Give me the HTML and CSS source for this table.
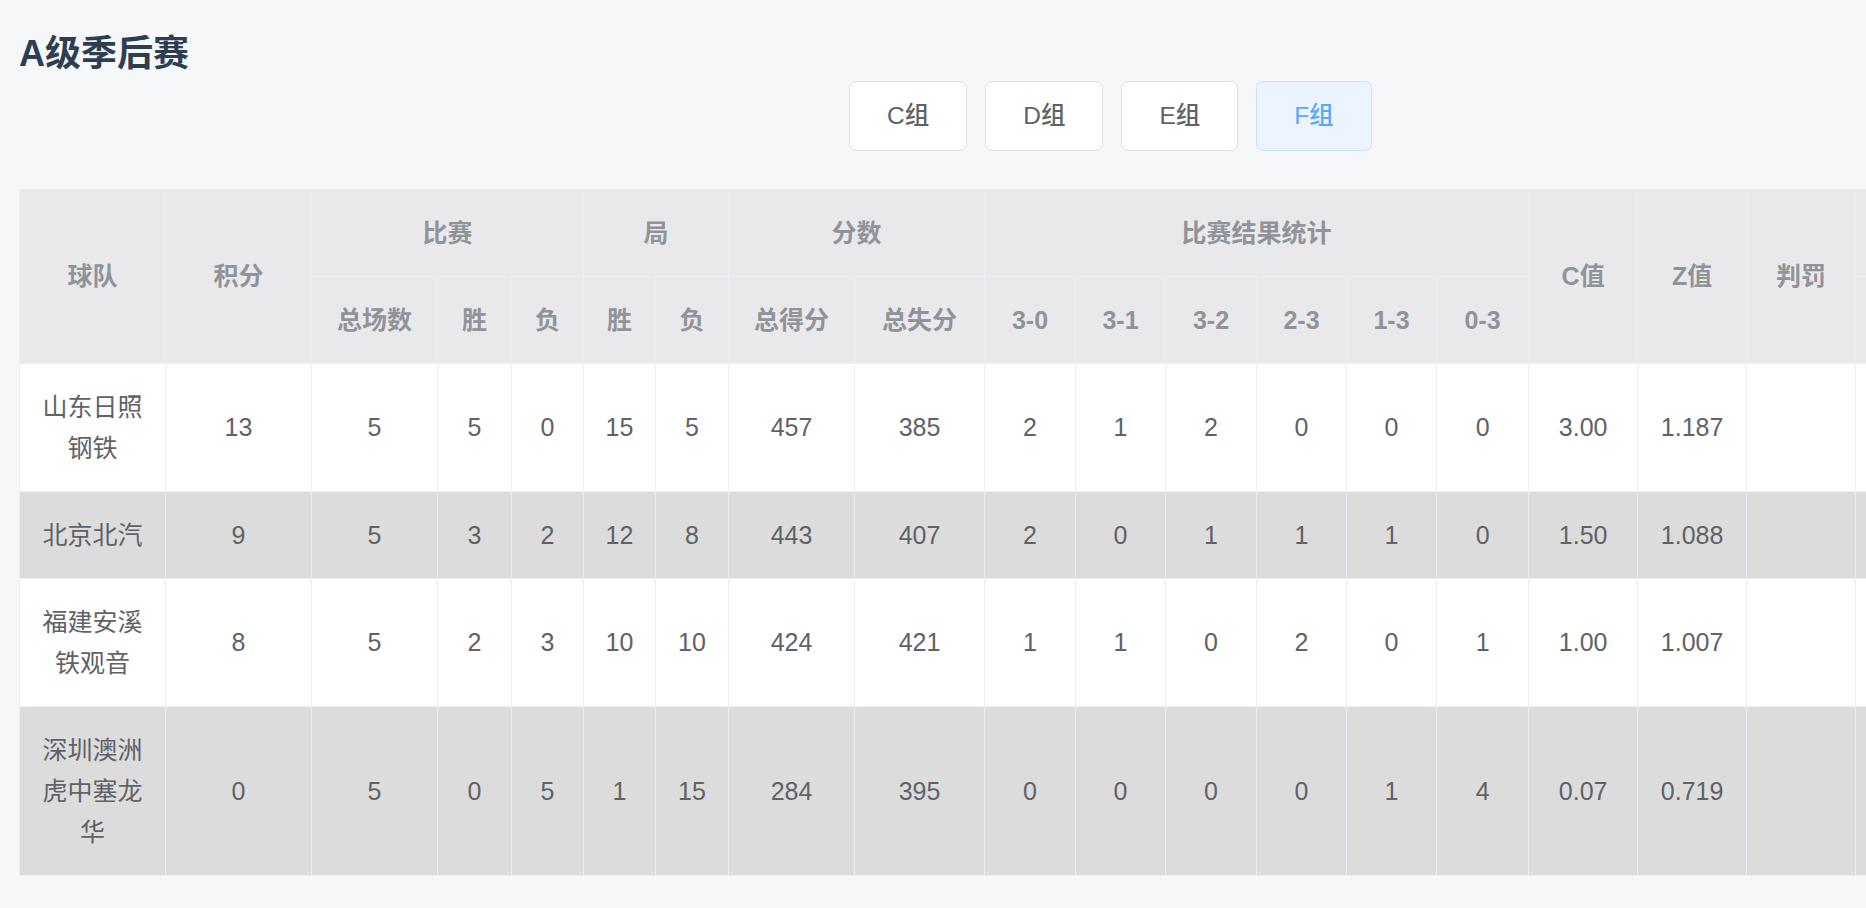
FILE: index.html
```html
<!DOCTYPE html>
<html lang="zh-CN">
<head>
<meta charset="utf-8">
<title>A级季后赛</title>
<link rel="stylesheet" href="styles.css">
</head>
<body>
<div class="page">
  <h1 class="title">A级季后赛</h1>
  <div class="groups">
    <button class="btn">C组</button>
    <button class="btn">D组</button>
    <button class="btn">E组</button>
    <button class="btn active">F组</button>
  </div>
  <div class="table-wrap">
    <table class="standings">
      <colgroup>
        <col class="w146"><col class="w146"><col class="w126"><col class="w74"><col class="w72"><col class="w72"><col class="w73"><col class="w126"><col class="w130"><col class="w91"><col class="w90"><col class="w91"><col class="w90"><col class="w90"><col class="w92"><col class="w109"><col class="w109"><col class="w109"><col class="w180"><col class="w180">
      </colgroup>
      <thead>
        <tr>
          <th rowspan="2">球队</th>
          <th rowspan="2">积分</th>
          <th colspan="3">比赛</th>
          <th colspan="2">局</th>
          <th colspan="2">分数</th>
          <th colspan="6">比赛结果统计</th>
          <th rowspan="2">C值</th>
          <th rowspan="2">Z值</th>
          <th rowspan="2">判罚</th>
          <th colspan="2"></th>
        </tr>
        <tr>
          <th>总场数</th><th>胜</th><th>负</th>
          <th>胜</th><th>负</th>
          <th>总得分</th><th>总失分</th>
          <th>3-0</th><th>3-1</th><th>3-2</th><th>2-3</th><th>1-3</th><th>0-3</th>
          <th></th><th></th>
        </tr>
      </thead>
      <tbody>
        <tr>
          <td>山东日照钢铁</td><td>13</td><td>5</td><td>5</td><td>0</td><td>15</td><td>5</td><td>457</td><td>385</td><td>2</td><td>1</td><td>2</td><td>0</td><td>0</td><td>0</td><td>3.00</td><td>1.187</td><td></td><td></td><td></td>
        </tr>
        <tr class="stripe">
          <td>北京北汽</td><td>9</td><td>5</td><td>3</td><td>2</td><td>12</td><td>8</td><td>443</td><td>407</td><td>2</td><td>0</td><td>1</td><td>1</td><td>1</td><td>0</td><td>1.50</td><td>1.088</td><td></td><td></td><td></td>
        </tr>
        <tr>
          <td>福建安溪铁观音</td><td>8</td><td>5</td><td>2</td><td>3</td><td>10</td><td>10</td><td>424</td><td>421</td><td>1</td><td>1</td><td>0</td><td>2</td><td>0</td><td>1</td><td>1.00</td><td>1.007</td><td></td><td></td><td></td>
        </tr>
        <tr class="stripe">
          <td>深圳澳洲虎中塞龙华</td><td>0</td><td>5</td><td>0</td><td>5</td><td>1</td><td>15</td><td>284</td><td>395</td><td>0</td><td>0</td><td>0</td><td>0</td><td>1</td><td>4</td><td>0.07</td><td>0.719</td><td></td><td></td><td></td>
        </tr>
      </tbody>
    </table>
  </div>
</div>
</body>
</html>
```

FILE: styles.css
```css
* {
  box-sizing: border-box;
}

html, body {
  margin: 0;
  padding: 0;
  background: #f6f7f9;
  overflow: hidden;
}

body {
  font-family: "Liberation Sans", "Noto Sans CJK SC", sans-serif;
  color: #606266;
}

.page {
  padding: 33px 0 0 19px;
}

.title {
  margin: 0;
  font-size: 36px;
  line-height: 42px;
  font-weight: 700;
  color: #2c3e50;
}

.groups {
  display: flex;
  gap: 18px;
  margin: 6px 0 0 830px;
}

.btn {
  font-family: "Liberation Sans", "Noto Sans CJK SC", sans-serif;
  font-size: 24.5px;
  line-height: 26px;
  font-weight: 500;
  color: #606266;
  background: #ffffff;
  border: 1px solid #dcdfe6;
  border-radius: 7px;
  padding: 21px 37px;
  margin: 0;
  cursor: pointer;
}

.btn.active {
  color: #5aa7f8;
  background: #ecf5ff;
  border-color: #c6e2ff;
}

.table-wrap {
  margin-top: 38px;
  overflow: hidden;
}

.standings {
  border-collapse: collapse;
  table-layout: fixed;
  width: 2196px;
  font-size: 25px;
  line-height: 41px;
}

.standings th,
.standings td {
  border: 1px solid #ebeef5;
  padding: 22.5px 18px;
  text-align: center;
  vertical-align: middle;
}

.standings th {
  background: #e9e9eb;
  color: #909399;
  font-weight: 600;
}

.standings td {
  background: #ffffff;
  color: #606266;
}

.standings tr.stripe td {
  background: #dcdcdc;
}

.w146 { width: 146px; }
.w126 { width: 126px; }
.w130 { width: 130px; }
.w74 { width: 74px; }
.w73 { width: 73px; }
.w72 { width: 72px; }
.w92 { width: 92px; }
.w91 { width: 91px; }
.w90 { width: 90px; }
.w109 { width: 109px; }
.w180 { width: 180px; }
```
